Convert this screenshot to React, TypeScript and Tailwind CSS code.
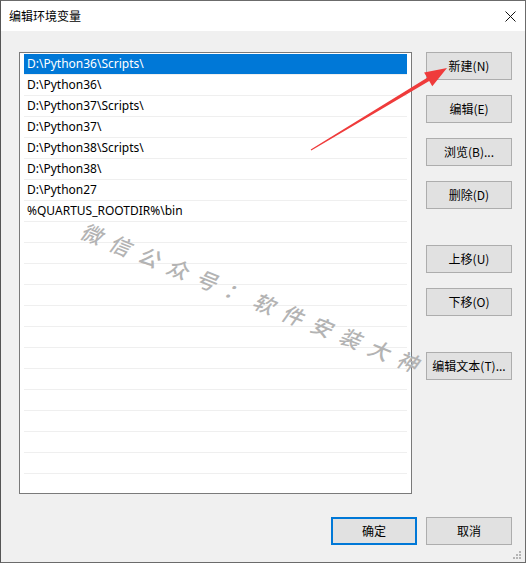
import React from 'react';

const paths = [
  'D:\\Python36\\Scripts\\',
  'D:\\Python36\\',
  'D:\\Python37\\Scripts\\',
  'D:\\Python37\\',
  'D:\\Python38\\Scripts\\',
  'D:\\Python38\\',
  'D:\\Python27',
  '%QUARTUS_ROOTDIR%\\bin',
];

const rows = Array.from({ length: 21 }, (_, i) => paths[i] ?? '');

const uiFont = "font-['Segoe_UI','Noto_Sans','Noto_Sans_CJK_SC',sans-serif]";
const cjkFont = "font-['Noto_Sans_CJK_SC',sans-serif]";

function Btn({ label, className = '', primary = false }: { label: string; className?: string; primary?: boolean }) {
  return (
    <div
      className={`w-[86px] h-[28px] flex items-center justify-center bg-[#e1e1e1] text-[12px] text-black ${cjkFont} ${
        primary ? 'border-2 border-[#0078d7]' : 'border border-[#adadad]'
      } ${className}`}
    >
      {label}
    </div>
  );
}

export default function App() {
  return (
    <div className="relative w-[527px] h-[564px] bg-white overflow-hidden">
      <div className="w-[526px] h-[563px] flex flex-col border border-[#6b6b6b] border-l-[#555]">
        {/* title bar */}
        <div className="h-[30px] bg-white flex items-center justify-between pl-[8px] pr-[9px] shrink-0">
          <span className={`text-[12px] text-black ${cjkFont}`}>编辑环境变量</span>
          <svg width="11" height="11" viewBox="0 0 11 11">
            <path d="M0.5 0.5L10.5 10.5M10.5 0.5L0.5 10.5" stroke="#111" strokeWidth="1" />
          </svg>
        </div>

        {/* body */}
        <div className="relative flex-1 bg-[#f0f0f0] pl-[18px] pt-[21px]">
          <div className="flex gap-[14px]">
            <div className="w-[393px] h-[442px] bg-white border border-[#7a7a7a] overflow-hidden px-[4px] pt-[1px]">
              {rows.map((p, i) => (
                <div
                  key={i}
                  className={`h-[21px] flex items-center pl-[3px] text-[12px] border-b border-[#efefef] ${uiFont} ${
                    i === 0 ? 'bg-[#0078d7] text-white' : 'text-black'
                  }`}
                >
                  {p}
                </div>
              ))}
            </div>

            <div className="flex flex-col gap-[15px]">
              <Btn label="新建(N)" />
              <Btn label="编辑(E)" />
              <Btn label="浏览(B)..." />
              <Btn label="删除(D)" />
              <Btn label="上移(U)" className="mt-[21px]" />
              <Btn label="下移(O)" />
              <Btn label="编辑文本(T)..." className="mt-[21px]" />
            </div>
          </div>

          <div className="flex justify-end gap-[9px] pr-[13px] mt-[23px]">
            <Btn label="确定" primary />
            <Btn label="取消" />
          </div>

          {/* resize grip */}
          <svg className="absolute right-[3px] bottom-[2px]" width="10" height="10" viewBox="0 0 10 10">
            <rect x="7" y="1" width="2" height="2" fill="#b5b5b5" />
            <rect x="4" y="4" width="2" height="2" fill="#b5b5b5" />
            <rect x="7" y="4" width="2" height="2" fill="#b5b5b5" />
            <rect x="1" y="7" width="2" height="2" fill="#b5b5b5" />
            <rect x="4" y="7" width="2" height="2" fill="#b5b5b5" />
            <rect x="7" y="7" width="2" height="2" fill="#b5b5b5" />
          </svg>
        </div>
      </div>

      {/* watermark */}
      <div
        className={`absolute left-[82px] top-[218px] h-[22px] leading-[22px] whitespace-nowrap origin-[0_50%] rotate-[22deg] text-[21px] font-medium tracking-[10px] text-[#b3b3b3] italic ${cjkFont}`}
      >
        微信公众号：软件安装大神
      </div>

      {/* red arrow */}
      <svg className="absolute left-0 top-0 pointer-events-none" width="527" height="564" viewBox="0 0 527 564">
        <polygon
          points="311.3,150.4 429.2,81.1 432.3,86.2 447,68 424.1,72.6 427.2,77.7 310.7,149.6"
          fill="#ef3b3b"
        />
      </svg>
    </div>
  );
}
